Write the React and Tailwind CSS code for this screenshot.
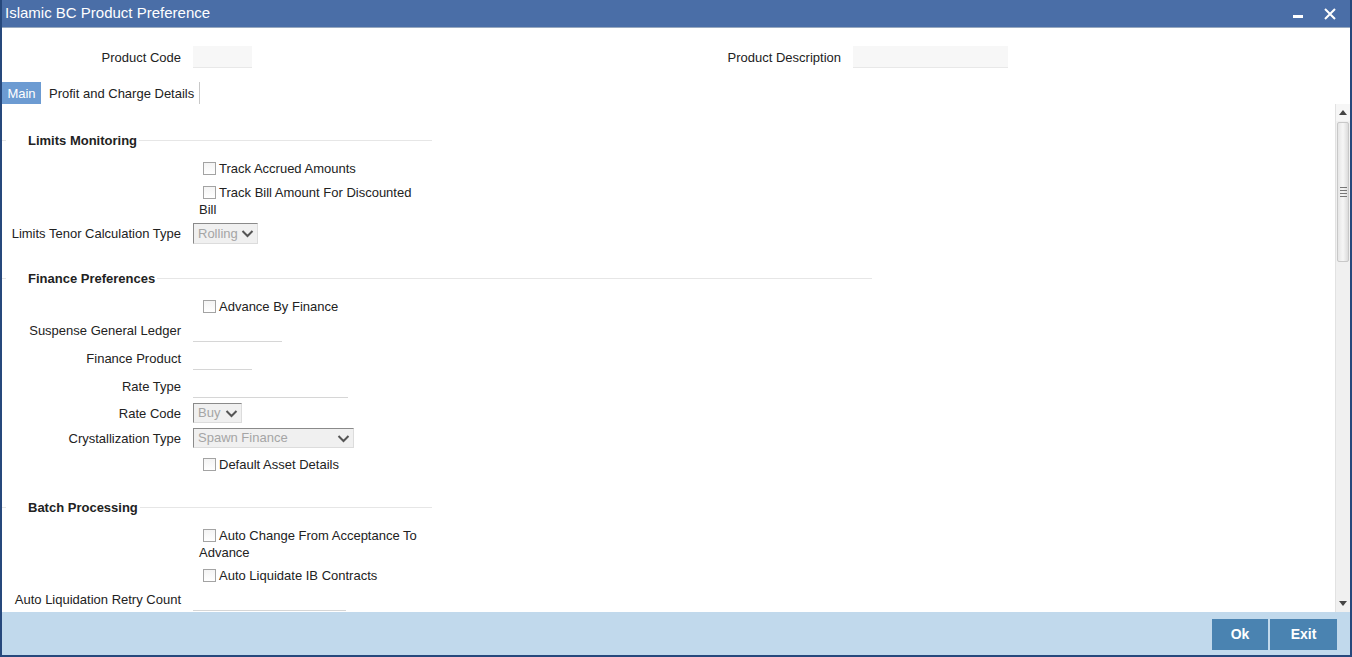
import React from 'react';

const font = { fontFamily: '"Liberation Sans", Arial, sans-serif' };

function Checkbox({ label, className = '' }) {
  return (
    <div className={`ml-[197px] w-[228px] text-[13px] leading-[17px] text-[#222] ${className}`}>
      <span className="inline-block align-[-2px] ml-[4px] mr-[3px] w-[13px] h-[13px] border border-[#a3a3a3] bg-gradient-to-b from-[#f4f4f4] to-white"></span>
      {label}
    </div>
  );
}

function Row({ label, children, className = '' }) {
  return (
    <div className={`flex items-center h-[24px] ${className}`}>
      <div className="w-[179px] pt-[1px] text-right text-[13px] text-[#222] whitespace-nowrap">{label}</div>
      <div className="ml-[12px] flex items-center h-full">{children}</div>
    </div>
  );
}

function Underline({ w }) {
  return <div className={`${w} h-full border-b border-[#d6d6d6]`}></div>;
}

function Select({ value, w }) {
  return (
    <div className={`${w} h-[20px] flex items-center justify-between bg-[#f0f0f0] border border-t-[#8a8a8a] border-l-[#8a8a8a] border-r-[#dcdcdc] border-b-[#dcdcdc] pl-[4px] pr-[3px]`}>
      <span className="text-[13px] text-[#a5a5a5]">{value}</span>
      <svg width="13" height="9" viewBox="0 0 13 9">
        <path d="M1.5 2 L6.5 7 L11.5 2" fill="none" stroke="#555" strokeWidth="2" />
      </svg>
    </div>
  );
}

function Section({ title, lineW, className = '' }) {
  return (
    <div className={`flex items-center h-[24px] ${lineW} ${className}`}>
      <div className="w-[4px] border-t border-[#e6e6e6]"></div>
      <div className="ml-[20px] px-[2px] pt-[2px] text-[13px] font-bold text-[#222] whitespace-nowrap">{title}</div>
      <div className="flex-1 border-t border-[#e6e6e6]"></div>
    </div>
  );
}

export default function App() {
  return (
    <div style={font} className="w-[1352px] h-[657px] flex flex-col bg-white border-l-2 border-r-2 border-b-2 border-[#26487c] overflow-hidden">
      {/* Title bar */}
      <div className="h-[28px] flex items-center justify-between bg-[#4a6ea7] border-b border-[#98a9bf] pl-[3px] pr-[14px]">
        <span className="text-[15px] text-white">Islamic BC Product Preference</span>
        <div className="flex items-center gap-[20px]">
          <svg width="11" height="12" viewBox="0 0 11 12"><rect x="0" y="7" width="10" height="3" fill="#fff" /></svg>
          <svg width="12" height="12" viewBox="0 0 12 12"><path d="M1 1 L11 11 M11 1 L1 11" stroke="#fff" strokeWidth="2" /></svg>
        </div>
      </div>

      {/* Product header */}
      <div className="flex items-center h-[22px] mt-[18px]">
        <div className="w-[179px] pt-[1px] text-right text-[13px] text-[#222]">Product Code</div>
        <div className="ml-[12px] w-[59px] h-full bg-[#f7f7f7] border-b border-[#e8e8e8]"></div>
        <div className="ml-[475px] w-[114px] pt-[1px] text-right text-[13px] text-[#222]">Product Description</div>
        <div className="ml-[12px] w-[155px] h-full bg-[#f7f7f7] border-b border-[#e8e8e8]"></div>
      </div>

      {/* Tabs */}
      <div className="flex h-[22px] mt-[14px] text-[13px]">
        <div className="w-[39px] flex items-center justify-center bg-[#6c9bd2] text-white pt-[1px]">Main</div>
        <div className="pl-[8px] pr-[5px] pt-[1px] flex items-center text-[#222] border-r border-[#c8c8c8]">Profit and Charge Details</div>
      </div>

      {/* Content */}
      <div className="flex flex-1 min-h-0">
        <div className="flex-1 overflow-hidden">
          <Section title="Limits Monitoring" lineW="w-[430px]" className="mt-[24px]" />
          <Checkbox label="Track Accrued Amounts" className="mt-[4px] py-[3.5px]" />
          <Checkbox label="Track Bill Amount For Discounted Bill" className="mt-[4px]" />
          <div className="flex items-center h-[21px] mt-[5px]">
            <div className="w-[179px] pt-[1px] text-right text-[13px] text-[#222]">Limits Tenor Calculation Type</div>
            <div className="ml-[12px]"><Select value="Rolling" w="w-[65px] h-[21px]" /></div>
          </div>

          <Section title="Finance Preferences" lineW="w-[870px]" className="mt-[22px]" />
          <Checkbox label="Advance By Finance" className="mt-[4px] py-[3.5px]" />
          <Row label="Suspense General Ledger"><Underline w="w-[89px]" /></Row>
          <Row label="Finance Product" className="mt-[4px]"><Underline w="w-[59px]" /></Row>
          <Row label="Rate Type" className="mt-[4px]"><Underline w="w-[155px]" /></Row>
          <div className="flex items-center h-[20px] mt-[5px]">
            <div className="w-[179px] pt-[1px] text-right text-[13px] text-[#222]">Rate Code</div>
            <div className="ml-[12px]"><Select value="Buy" w="w-[49px]" /></div>
          </div>
          <div className="flex items-center h-[20px] mt-[5px]">
            <div className="w-[179px] pt-[1px] text-right text-[13px] text-[#222]">Crystallization Type</div>
            <div className="ml-[12px]"><Select value="Spawn Finance" w="w-[161px]" /></div>
          </div>
          <Checkbox label="Default Asset Details" className="mt-[4px] py-[3.5px]" />

          <Section title="Batch Processing" lineW="w-[430px]" className="mt-[19px]" />
          <Checkbox label="Auto Change From Acceptance To Advance" className="mt-[8px]" />
          <Checkbox label="Auto Liquidate IB Contracts" className="mt-[2px] py-[3.5px]" />
          <Row label="Auto Liquidation Retry Count"><Underline w="w-[153px]" /></Row>
        </div>

        {/* Scrollbar */}
        <div className="w-[15px] flex flex-col bg-[#f0f0f0] border-l border-[#e2e2e2]">
          <div className="h-[17px] flex items-center justify-center bg-[#f6f6f6]">
            <svg width="8" height="5" viewBox="0 0 8 5"><path d="M0 5 L4 0 L8 5 Z" fill="#444" /></svg>
          </div>
          <div className="mt-[1px] h-[140px] mx-[1px] rounded-[2px] border border-[#c8c8c8] bg-gradient-to-r from-[#e6e6e6] via-[#f6f6f6] to-[#dcdcdc] flex items-center justify-center">
            <div className="flex flex-col gap-[2px]">
              <div className="w-[7px] h-[1px] bg-[#777]"></div>
              <div className="w-[7px] h-[1px] bg-[#777]"></div>
              <div className="w-[7px] h-[1px] bg-[#777]"></div>
              <div className="w-[7px] h-[1px] bg-[#777]"></div>
            </div>
          </div>
          <div className="flex-1"></div>
          <div className="h-[17px] flex items-center justify-center">
            <svg width="8" height="5" viewBox="0 0 8 5"><path d="M0 0 L8 0 L4 5 Z" fill="#444" /></svg>
          </div>
        </div>
      </div>

      {/* Footer */}
      <div className="h-[43px] flex items-start justify-end bg-[#c1d9ec] pt-[7px] pr-[13px] gap-[2px]">
        <button className="w-[56px] h-[31px] bg-[#4a83b1] text-white text-[14px] font-bold">Ok</button>
        <button className="w-[67px] h-[31px] bg-[#4a83b1] text-white text-[14px] font-bold">Exit</button>
      </div>
    </div>
  );
}
